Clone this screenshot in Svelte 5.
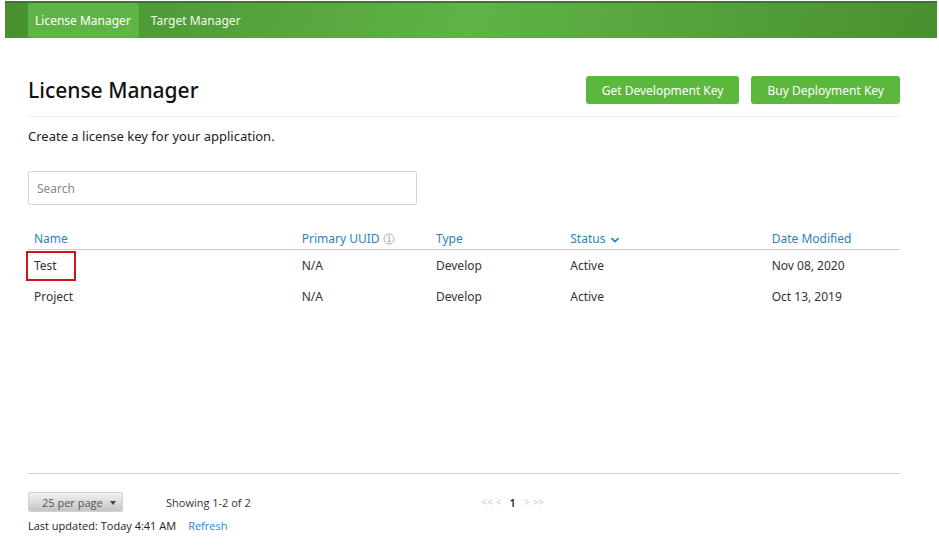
<script>
  const licenses = [
    { name: 'Test', uuid: 'N/A', type: 'Develop', status: 'Active', modified: 'Nov 08, 2020', marked: true },
    { name: 'Project', uuid: 'N/A', type: 'Develop', status: 'Active', modified: 'Oct 13, 2019', marked: false }
  ];
  let query = $state('');
  let perPage = $state('25');
  const shown = $derived(
    licenses.filter((l) => l.name.toLowerCase().includes(query.trim().toLowerCase()))
  );
</script>

<header>
  <nav aria-label="Main">
    <a class="tab active" href="#licenses" aria-current="page">License Manager</a>
    <a class="tab" href="#targets">Target Manager</a>
  </nav>
</header>

<main>
  <div class="title-row">
    <h1>License Manager</h1>
    <div class="actions">
      <button class="primary" type="button">Get Development Key</button>
      <button class="primary" type="button">Buy Deployment Key</button>
    </div>
  </div>

  <p class="intro">Create a license key for your application.</p>

  <input class="search" type="text" placeholder="Search" aria-label="Search" bind:value={query} />

  <div class="table-area">
    <table>
      <colgroup>
        <col class="c-name" />
        <col class="c-mid" />
        <col class="c-mid" />
        <col class="c-status" />
        <col class="c-mid" />
      </colgroup>
      <thead>
        <tr>
          <th scope="col"><a href="#name">Name</a></th>
          <th scope="col">
            <a href="#uuid">Primary UUID</a><svg class="info" viewBox="0 0 12 12" aria-hidden="true">
              <circle cx="6" cy="6" r="5" fill="none" stroke="#aeb2b6" stroke-width="1" />
              <path d="M5 5h1.3v3.5M4.7 8.6h3" fill="none" stroke="#a2a6aa" stroke-width="1" />
              <circle cx="6" cy="3.3" r="0.8" fill="#a2a6aa" />
            </svg>
          </th>
          <th scope="col"><a href="#type">Type</a></th>
          <th scope="col">
            <a href="#status">Status<svg class="chevron" viewBox="0 0 10 6" aria-hidden="true">
              <path d="M1.4 1.2L5 4.6l3.6-3.4" fill="none" stroke="#1583c4" stroke-width="1.7" />
            </svg></a>
          </th>
          <th scope="col"><a href="#modified">Date Modified</a></th>
        </tr>
      </thead>
      <tbody>
        {#each shown as l (l.name)}
          <tr>
            <td><span class="name" class:marked={l.marked}>{l.name}</span></td>
            <td>{l.uuid}</td>
            <td>{l.type}</td>
            <td>{l.status}</td>
            <td>{l.modified}</td>
          </tr>
        {/each}
      </tbody>
    </table>
  </div>

  <footer>
    <div class="pager">
      <div class="left">
        <div class="select">
          <select aria-label="Rows per page" bind:value={perPage}>
            <option value="25">25 per page</option>
            <option value="50">50 per page</option>
            <option value="100">100 per page</option>
          </select>
          <svg viewBox="0 0 6 4" aria-hidden="true"><path d="M0 0h6L3 4z" fill="#444" /></svg>
        </div>
        <span>Showing 1-2 of 2</span>
      </div>
      <div class="pages">
        <a href="#first" aria-label="First page">&lt;&lt;</a>
        <a href="#previous" aria-label="Previous page">&lt;</a>
        <strong>1</strong>
        <a href="#next" aria-label="Next page">&gt;</a>
        <a href="#last" aria-label="Last page">&gt;&gt;</a>
      </div>
    </div>
    <div class="updated">
      <span>Last updated: Today 4:41 AM</span>
      <a href="#refresh">Refresh</a>
    </div>
  </footer>
</main>

<style>
  :global(body) {
    background: #fff;
    color: #333;
    font-family: 'Noto Sans', 'Open Sans', sans-serif;
    font-size: 12px;
  }
  a {
    text-decoration: none;
  }
  header {
    margin: 1px 2px 0 5px;
    padding-left: 23px;
    border-top: 2px solid #43703a;
    background: linear-gradient(100deg, #48902f 0%, #5fb446 50%, #48902f 100%);
  }
  nav {
    display: flex;
  }
  .tab {
    padding: 0 8px 0 12px;
    color: #f4faf2;
    font-size: 12px;
    line-height: 35px;
  }
  .tab.active {
    padding: 0 8px 0 7px;
    border-radius: 3px;
    background: #5fb446;
    color: #fff;
  }
  main {
    padding: 38px 39px 0 28px;
  }
  .title-row {
    display: flex;
    align-items: flex-start;
    justify-content: space-between;
    height: 40px;
    border-bottom: 1px solid #eee;
  }
  h1 {
    margin: 0;
    color: #111;
    font-size: 21px;
    font-weight: 500;
    line-height: 28px;
  }
  .actions {
    display: flex;
    gap: 12px;
  }
  .primary {
    height: 28px;
    padding: 0 16px;
    border: 0;
    border-radius: 3px;
    background: #5cb83c;
    color: #fff;
    font: 12px 'Noto Sans', 'Open Sans', sans-serif;
  }
  .intro {
    margin: 9px 0 25px;
    color: #222;
    font-size: 13px;
    line-height: 20px;
  }
  .search {
    display: block;
    box-sizing: border-box;
    width: 44.6%;
    min-width: 200px;
    height: 34px;
    padding: 0 8px;
    border: 1px solid #d5d5d5;
    border-radius: 2px;
    background: #fff;
    color: #333;
    font: 12px 'Noto Sans', 'Open Sans', sans-serif;
  }
  .search::placeholder {
    color: #888;
    opacity: 1;
  }
  .table-area {
    min-height: 245px;
    margin-top: 23px;
    border-bottom: 1px solid #d0d0d0;
  }
  table {
    width: 100%;
    table-layout: fixed;
    border-collapse: collapse;
  }
  .c-name {
    width: 30.7%;
  }
  .c-mid {
    width: 15.4%;
  }
  .c-status {
    width: 23.1%;
  }
  th,
  td {
    height: 31px;
    padding: 0 6px;
    font-size: 12px;
    font-weight: 400;
    line-height: 20px;
    text-align: left;
    vertical-align: middle;
    white-space: nowrap;
  }
  th {
    height: 21px;
    border-bottom: 1px solid #ccc;
  }
  th a {
    color: #2a82bd;
  }
  .info {
    width: 12px;
    height: 12px;
    margin-left: 3px;
    vertical-align: -2px;
  }
  .chevron {
    width: 10px;
    height: 6px;
    margin-left: 5px;
  }
  .name {
    display: inline-block;
  }
  .marked {
    margin: 0 0 0 -8px;
    padding: 3px 17px 3px 6px;
    border: 2px solid #d01418;
  }
  footer {
    padding-top: 18px;
    font: 11px 'Open Sans', 'Noto Sans', sans-serif;
  }
  .pager {
    display: grid;
    grid-template-columns: 52% auto;
    align-items: center;
  }
  .left {
    display: flex;
    align-items: center;
    gap: 43px;
  }
  .select {
    position: relative;
    display: flex;
  }
  .select svg {
    position: absolute;
    right: 7px;
    top: 9px;
    width: 6px;
    height: 4px;
    pointer-events: none;
  }
  select {
    appearance: none;
    width: 95px;
    height: 20px;
    padding: 0 0 0 13px;
    border: 1px solid #d0d0d0;
    border-radius: 2px;
    background: linear-gradient(#f2f2f2, #c4c4c4);
    color: #555;
    font: 11px 'Open Sans', 'Noto Sans', sans-serif;
  }
  .pages {
    display: flex;
    align-items: center;
    gap: 3px;
  }
  .pages a {
    color: #b4d3ee;
    font-size: 10px;
  }
  .pages strong {
    margin: 0 5px;
    color: #222;
    font-weight: 600;
  }
  .updated {
    display: flex;
    gap: 12px;
    margin-top: 6px;
    line-height: 16px;
  }
  .updated span {
    color: #222;
  }
  .updated a {
    color: #2f7fd0;
  }
</style>
